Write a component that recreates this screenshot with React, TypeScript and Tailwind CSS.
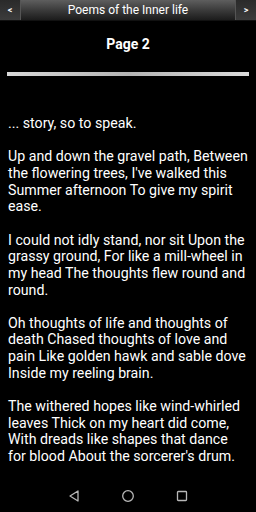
import React from 'react';

const paragraphs = [
  '... story, so to speak.',
  "Up and down the gravel path, Between the flowering trees, I've walked this Summer afternoon To give my spirit ease.",
  'I could not idly stand, nor sit Upon the grassy ground, For like a mill-wheel in my head The thoughts flew round and round.',
  'Oh thoughts of life and thoughts of death Chased thoughts of love and pain Like golden hawk and sable dove Inside my reeling brain.',
  "The withered hopes like wind-whirled leaves Thick on my heart did come, With dreads like shapes that dance for\u00a0blood About the sorcerer's drum.",
];

export default function App() {
  return (
    <div className="w-[256px] h-[512px] bg-black flex flex-col overflow-hidden" style={{ fontFamily: 'Roboto, sans-serif' }}>
      {/* Header */}
      <div className="h-[21px] flex bg-gradient-to-b from-[#5e5e5e] to-[#1c1c1c] border-b border-[#111]">
        <div className="w-[21px] flex items-center justify-center bg-gradient-to-b from-[#2a2a2a] to-[#3c3c3c] border-r border-[#555]">
          <span className="text-white text-[9px] font-bold leading-none">&lt;</span>
        </div>
        <div className="flex-1 flex items-center justify-center text-white text-[12px] leading-none">
          Poems of the Inner life
        </div>
        <div className="w-[21px] flex items-center justify-center bg-gradient-to-b from-[#2a2a2a] to-[#3c3c3c] border-l border-[#555]">
          <span className="text-white text-[9px] font-bold leading-none">&gt;</span>
        </div>
      </div>

      {/* Page title */}
      <div className="h-[30px] mt-[8px] flex items-center justify-center text-white text-[14px] font-bold">
        Page 2
      </div>
      <div className="mx-[7px] mt-[13px] h-[4px] bg-gradient-to-r from-[#d8d8d8] via-[#b4b4b4] to-[#dcdcdc]" />

      {/* Body */}
      <div className="flex-1 pl-[8px] pr-[5px] pt-[39px] flex flex-col gap-[16.65px] text-white text-[14.2px] leading-[16.65px]">
        {paragraphs.map((p, i) => (
          <p key={i}>{p}</p>
        ))}
      </div>

      {/* Nav bar */}
      <div className="h-[30px] flex items-center justify-center gap-[40px] mb-[1px]">
        <svg width="14" height="14" viewBox="0 0 14 14" fill="none" stroke="#b8b8b8" strokeWidth="1.3">
          <path d="M11 2 L3 7 L11 12 Z" strokeLinejoin="round" />
        </svg>
        <svg width="14" height="14" viewBox="0 0 14 14" fill="none" stroke="#b8b8b8" strokeWidth="1.3">
          <circle cx="7" cy="7" r="5.3" />
        </svg>
        <svg width="14" height="14" viewBox="0 0 14 14" fill="none" stroke="#b8b8b8" strokeWidth="1.3">
          <rect x="2.5" y="2.5" width="9" height="9" rx="0.8" />
        </svg>
      </div>
    </div>
  );
}
